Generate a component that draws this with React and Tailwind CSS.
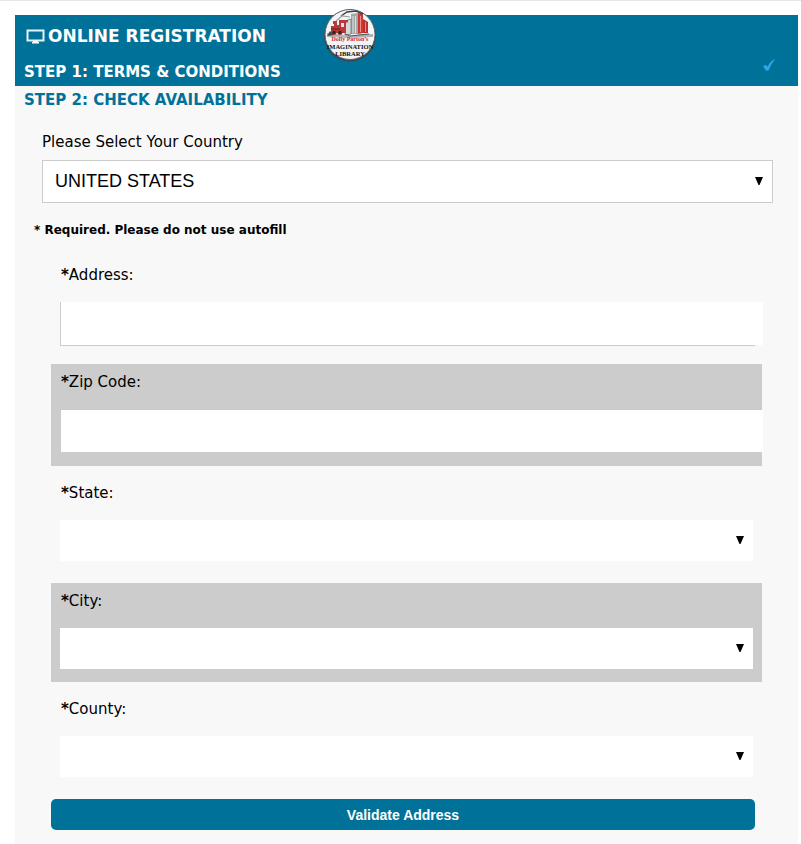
import React from "react";

function Logo() {
  return (
    <svg viewBox="0 0 54 54" className="block h-[54px] w-[54px]" role="img" aria-label="Dolly Parton's Imagination Library">
      <circle cx="27" cy="27.5" r="26" fill="#3c4549" />
      <circle cx="27" cy="26.5" r="25" fill="#f3f4f4" stroke="#5c6468" strokeWidth="1" />
      <path d="M4 25 L14 26 L27 28 L40 26 L50 26 L50 29 L27 30 L4 29Z" fill="#b0b4b5" />
      <path d="M28 6 L35 5 L35 26 L28 26Z" fill="#a4a8aa" />
      <path d="M30 8 V25 M32.5 8 V25" stroke="#dcdfe0" strokeWidth="1" />
      <path d="M35 5 L40 6 L40 25 L35 26Z" fill="#cf3634" />
      <path d="M40 11 L45 14 V25 L40 25Z" fill="#b9302f" />
      <path d="M37.5 8 V24 M42.5 14 V24" stroke="#e8aaa7" strokeWidth=".8" />
      <path d="M18 8 L24 4 L33 3 L40 6" fill="none" stroke="#3c4245" strokeWidth="1.4" />
      <path d="M13 13 L19 8 L27 9" fill="none" stroke="#9da2a4" strokeWidth="1.2" />
      <path d="M22 13 L28 11 V26 L22 27Z" fill="#d7d9d9" stroke="#5d6467" strokeWidth=".7" />
      <path d="M8 18 H11 V16 H10 V13 H14 V17 H16 V12 H25 V14.5 H23 V25 H8Z" fill="#b83b3a" />
      <path d="M18 15 H21 V19 H18Z" fill="#f3dddd" />
      <path d="M8 21 H17" stroke="#5b2020" strokeWidth="1" />
      <path d="M7 23 L4 28 L11 27Z" fill="#404649" />
      <circle cx="11" cy="24.5" r="2.2" fill="#2b2b2b" stroke="#c93433" strokeWidth=".8" />
      <circle cx="17" cy="24.5" r="2.2" fill="#2b2b2b" stroke="#c93433" strokeWidth=".8" />
      <path d="M22 26 L27 28 L46 26" stroke="#4b5559" strokeWidth="1" fill="none" />
      <text x="27" y="33" textAnchor="middle" fontSize="6" fontWeight="700" fill="#cb2932" fontFamily="'Liberation Serif', serif">Dolly Parton’s</text>
      <text x="27" y="40.5" textAnchor="middle" fontSize="6.5" fontWeight="700" fill="#101214" fontFamily="'Liberation Serif', serif">IMAGINATION</text>
      <text x="27" y="47.5" textAnchor="middle" fontSize="6.5" fontWeight="700" fill="#101214" fontFamily="'Liberation Serif', serif">LIBRARY</text>
    </svg>
  );
}

function Arrow({ className }) {
  return (
    <svg viewBox="0 0 8 8" aria-hidden="true" className={`pointer-events-none absolute h-2 w-2 ${className}`}>
      <path d="M0 0H8L4.5 8H3.5Z" fill="#000" />
    </svg>
  );
}

function FieldLabel({ id, children }) {
  return (
    <label htmlFor={id} className="block h-[45px] pt-2 pl-[10px] text-[15px] leading-5">
      <span className="font-bold">*</span>
      {children}
    </label>
  );
}

function SelectField({ id, label, shaded }) {
  return (
    <div className={`pb-[13px] ${shaded ? "bg-[#ccc]" : ""}`}>
      <FieldLabel id={id}>{label}</FieldLabel>
      <div className="relative mr-[9px] ml-[9px]">
        <select id={id} defaultValue="" className="block h-[41px] w-full appearance-none bg-white px-3 text-lg outline-none">
          <option value=""></option>
        </select>
        <Arrow className="top-4 right-[9px]" />
      </div>
    </div>
  );
}

export default function App() {
  return (
    <div className="min-h-screen border-t border-[#e5e7eb] bg-white pt-[14px] pr-[3px] pl-[15px] font-['DejaVu_Sans',Verdana,sans-serif] text-black">
      <main className="bg-[#f8f8f8] pb-[14px]">
        <header className="relative bg-[#007299] text-white">
          <h1 className="flex h-[42px] items-center gap-[3px] pl-[11px] text-[17px] leading-5 font-bold">
            <svg viewBox="0 0 19 15" aria-hidden="true" className="h-[15px] w-[19px]">
              <path d="M1.5 1.5H17.5V11.5H1.5Z" fill="none" stroke="#e6f4f8" strokeWidth="2" />
              <path d="M7 12H12V13H13V14.5H6V13H7Z" fill="#fff" />
            </svg>
            ONLINE REGISTRATION
          </h1>
          <div className="absolute top-[-7px] left-[308px]">
            <Logo />
          </div>
          <div className="flex h-[29px] items-center justify-between pr-[22px] pl-[9px]">
            <h2 className="text-[15px] leading-5 font-bold">STEP 1: TERMS &amp; CONDITIONS</h2>
            <svg viewBox="0 0 14 28" role="img" aria-label="Completed" className="h-7 w-[14px]">
              <path d="M1 8 L3.8 7 L5.4 8.8 C7.5 5 9.5 2.6 13 1 C10.5 4.5 8.2 8 6.8 12.2 L4.2 12.8Z" fill="#2ca8e8" />
            </svg>
          </div>
        </header>

        <h2 className="flex h-7 items-center pl-[9px] text-[15px] leading-5 font-bold text-[#007299]">STEP 2: CHECK AVAILABILITY</h2>

        <form onSubmit={(e) => e.preventDefault()}>
          <div className="mt-[18px] mr-[25px] ml-[27px]">
            <label htmlFor="country" className="block h-7 text-[15px] leading-5">Please Select Your Country</label>
            <div className="relative">
              <select id="country" className="block h-[43px] w-full appearance-none border border-[#ccc] bg-white px-3 pb-0.5 font-['Liberation_Sans',Arial,sans-serif] text-lg outline-none">
                <option>UNITED STATES</option>
              </select>
              <Arrow className="top-[17px] right-[10px]" />
            </div>
          </div>

          <p className="mt-[17px] pl-[19px] text-xs leading-5 font-bold">* Required. Please do not use autofill</p>

          <div className="mt-[17px] mr-9 ml-9 flex flex-col gap-[9px]">
            <div className="pb-[9px]">
              <FieldLabel id="address">Address:</FieldLabel>
              <div className="mr-[7px] ml-[9px] border-b border-l border-[#ccc]">
                <input id="address" type="text" autoComplete="off" className="block h-[43px] w-[calc(100%+8px)] bg-white px-3 text-lg outline-none" />
              </div>
            </div>

            <div className="bg-[#ccc] pb-[14px]">
              <FieldLabel id="zip">Zip Code:</FieldLabel>
              <div className="mt-px ml-[10px]">
                <input id="zip" type="text" autoComplete="off" className="block h-[42px] w-[calc(100%+1px)] bg-white px-3 text-lg outline-none" />
              </div>
            </div>

            <SelectField id="state" label="State:" />
            <SelectField id="city" label="City:" shaded />
            <SelectField id="county" label="County:" />

            <button type="submit" className="mr-[7px] h-[31px] rounded-[5px] bg-[#007299] font-['Liberation_Sans',Arial,sans-serif] text-sm font-bold text-white">
              Validate Address
            </button>
          </div>
        </form>
      </main>
    </div>
  );
}
